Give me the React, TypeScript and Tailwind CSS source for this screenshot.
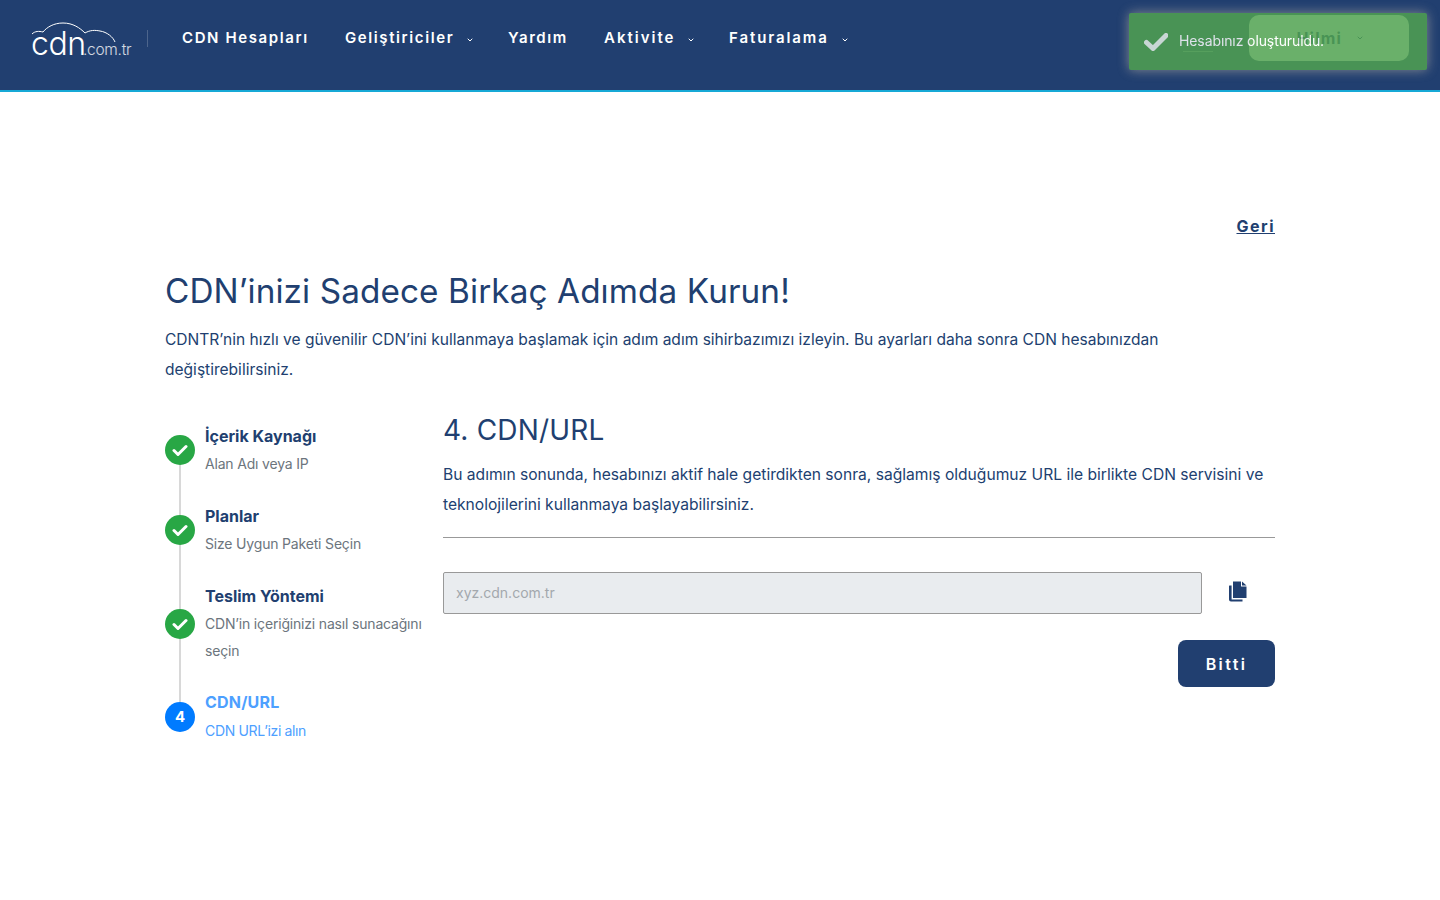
import { ChevronDown } from 'lucide-react';

const FONT = 'font-["Inter","Noto_Sans",sans-serif]';

const NAV = [
  { label: 'CDN Hesapları', w: 'w-[163px] tracking-[1.6px]' },
  { label: 'Geliştiriciler', caret: true, w: 'w-[163px] tracking-[1.6px]' },
  { label: 'Yardım', w: 'w-[96px] tracking-[1.6px]' },
  { label: 'Aktivite', caret: true, w: 'w-[125px] tracking-[2px]' },
  { label: 'Faturalama', caret: true, w: 'w-[150px] tracking-[1.9px]' },
];

const STEPS = [
  { title: 'İçerik Kaynağı', lines: ['Alan Adı veya IP'], h: 'h-[80px]', top: 'h-[11px]' },
  { title: 'Planlar', lines: ['Size Uygun Paketi Seçin'], h: 'h-[80px]', top: 'h-[11px] w-[2px] bg-[#d8d8d8]' },
  { title: 'Teslim Yöntemi', lines: ['CDN’in içeriğinizi nasıl sunacağını', 'seçin'], h: 'h-[106px]', top: 'h-[25px] w-[2px] bg-[#d8d8d8]' },
];

function Logo() {
  return (
    <div className="relative w-[102px] h-[36px]">
      <svg width="102" height="36" viewBox="0 0 102 36" fill="none" stroke="#fff" strokeWidth="1" className="absolute left-0 top-0">
        <path d="M2 12 C5 9 9 9 13 10 C17 5 24 1 33 1 C43 1 50 6 55 11 C60 8 65 8 70 9 C77 10 83 15 85 20" />
      </svg>
      <span className="absolute left-[1px] top-[4px] text-[32px] leading-[36px] font-light text-white font-['Inter',sans-serif] tracking-[-0.4px]">cdn</span>
      <span className="absolute left-[53px] top-[18px] text-[15.5px] leading-[20px] font-light text-white/80 font-['Inter',sans-serif] tracking-[-0.3px]">.com.tr</span>
    </div>
  );
}

function CopyIcon() {
  return (
    <svg width="20" height="22" viewBox="0 0 20 22" fill="#213f70">
      <path d="M5 0.5 H13 V5.5 H18.5 V17 H5 Z" />
      <path d="M14 0.5 L18.5 4.5 H14 Z" />
      <path d="M1.5 4.5 H3.6 V18.5 H14.5 V20.5 H3 Q1 20.5 1 18.5 V5 Q1 4.5 1.5 4.5 Z" />
    </svg>
  );
}

export default function App() {
  return (
    <div className={`min-h-[900px] bg-white text-[#213f70] ${FONT}`}>
      {/* Header */}
      <header className="h-[92px] bg-[#213f70] border-b-2 border-[#17a9d6] flex items-start pl-[30px] pr-[31px] pt-[22px]">
        <Logo />
        <div className="w-px h-[17px] bg-white/20 ml-[15px] mt-[8px]" />
        <nav className="flex ml-[34px] pt-[5px]">
          {NAV.map((n) => (
            <div key={n.label} className={`${n.w} flex items-center h-[22px] text-white text-[15px] font-semibold whitespace-nowrap`}>
              {n.label}
              {n.caret && <ChevronDown className="w-[8px] h-[8px] ml-[12px] mt-[3px]" strokeWidth={3} />}
            </div>
          ))}
        </nav>
        <div className="ml-auto flex items-start">
          <div className="mr-[36px] mt-[3px] text-[15px] leading-[22px] font-semibold text-[#213f70] border-b border-white/40 pb-[4px] w-[30px]">TR</div>
          <div className="w-[160px] h-[46px] -mt-[7px] rounded-[10px] bg-white flex items-center justify-end pr-[63px] gap-[14px] text-[16px] font-bold tracking-[1.2px] text-[#213f70]">
            Hilmi
            <ChevronDown className="w-[8px] h-[8px] mr-[-18px]" strokeWidth={3} />
          </div>
        </div>
      </header>

      {/* Toast */}
      <div className="fixed left-[1129px] top-[13px] w-[298px] h-[57px] rounded-[2px] bg-[#51a351] opacity-85 shadow-[0_0_12px_#999] flex items-center pl-[15px] pb-[2px] text-white">
        <svg width="24" height="20" viewBox="0 0 24 20" fill="none" className="opacity-85 mt-[2px]">
          <path d="M2.5 10.5 L9 16.5 L22 3.5" stroke="#fff" strokeWidth="5" strokeLinecap="round" strokeLinejoin="round" />
        </svg>
        <span className="ml-[11px] text-[14px] tracking-[-0.1px]">Hesabınız oluşturuldu.</span>
      </div>

      {/* Content */}
      <main className="w-[1110px] mx-auto pt-[123px]">
        <div className="text-right h-[22px] leading-[22px]">
          <a className="text-[16px] font-bold tracking-[1.5px] underline">Geri</a>
        </div>
        <h1 className="mt-[33px] text-[33.3px] leading-[42px] font-normal tracking-[0.1px]">CDN’inizi Sadece Birkaç Adımda Kurun!</h1>
        <p className="mt-[13px] w-[1020px] text-[15.55px] leading-[30px]">
          CDNTR’nin hızlı ve güvenilir CDN’ini kullanmaya başlamak için adım adım sihirbazımızı izleyin. Bu ayarları daha sonra CDN hesabınızdan değiştirebilirsiniz.
        </p>

        <div className="flex mt-[27px]">
          {/* Steps */}
          <div className="w-[278px] shrink-0 pt-[12px]">
            {STEPS.map((s) => (
              <div key={s.title} className={`flex ${s.h}`}>
                <div className="w-[30px] mr-[10px] shrink-0 flex flex-col items-center">
                  <div className={s.top} />
                  <div className="w-[30px] h-[30px] shrink-0 rounded-full bg-[#28a745] flex items-center justify-center">
                    <svg width="16" height="13" viewBox="0 0 16 13" fill="none">
                      <path d="M2 6.5 L6 10.5 L14 2.5" stroke="#fff" strokeWidth="3" strokeLinecap="round" strokeLinejoin="round" />
                    </svg>
                  </div>
                  <div className="w-[2px] flex-1 bg-[#d8d8d8]" />
                </div>
                <div className="min-w-0">
                  <div className="text-[16px] leading-[24px] font-bold">{s.title}</div>
                  {s.lines.map((l, i) => (
                    <div key={l} className={`${i === 0 ? 'mt-[4px]' : 'mt-[3px]'} text-[14px] leading-[24px] text-[#6c757d] whitespace-nowrap tracking-[-0.18px]`}>{l}</div>
                  ))}
                </div>
              </div>
            ))}
            <div className="flex">
              <div className="w-[30px] mr-[10px] shrink-0 flex flex-col items-center">
                <div className="w-[2px] h-[12px] bg-[#d8d8d8]" />
                <div className="w-[30px] h-[30px] rounded-full bg-[#007bff] flex items-center justify-center text-white text-[15px] font-bold">4</div>
              </div>
              <div>
                <div className="text-[16px] leading-[24px] font-bold text-[#4da0ff] tracking-[0.2px]">CDN/URL</div>
                <div className="mt-[5px] text-[14px] leading-[24px] text-[#4da0ff] tracking-[-0.35px]">CDN URL’izi alın</div>
              </div>
            </div>
          </div>

          {/* Right panel */}
          <div className="flex-1 min-w-0">
            <h2 className="text-[28px] leading-[36px] font-normal tracking-[0.2px]">4. CDN/URL</h2>
            <p className="mt-[12px] text-[15.62px] leading-[30px]">
              Bu adımın sonunda, hesabınızı aktif hale getirdikten sonra, sağlamış olduğumuz URL ile birlikte CDN servisini ve teknolojilerini kullanmaya başlayabilirsiniz.
            </p>
            <div className="mt-[17px] border-t border-[#999]" />
            <div className="mt-[34px] flex items-center">
              <div className="w-[759px] h-[42px] bg-[#e9ecef] border border-[#999] rounded-[2px] px-[12px] pb-[2px] flex items-center text-[14px] text-[#a3a8ad]">xyz.cdn.com.tr</div>
              <div className="ml-[26px] -mt-[3px]"><CopyIcon /></div>
            </div>
            <div className="mt-[26px] flex justify-end">
              <button className="w-[97px] h-[47px] bg-[#213f70] text-white rounded-[8px] text-[16px] font-semibold tracking-[2.4px]">Bitti</button>
            </div>
          </div>
        </div>
      </main>
    </div>
  );
}
